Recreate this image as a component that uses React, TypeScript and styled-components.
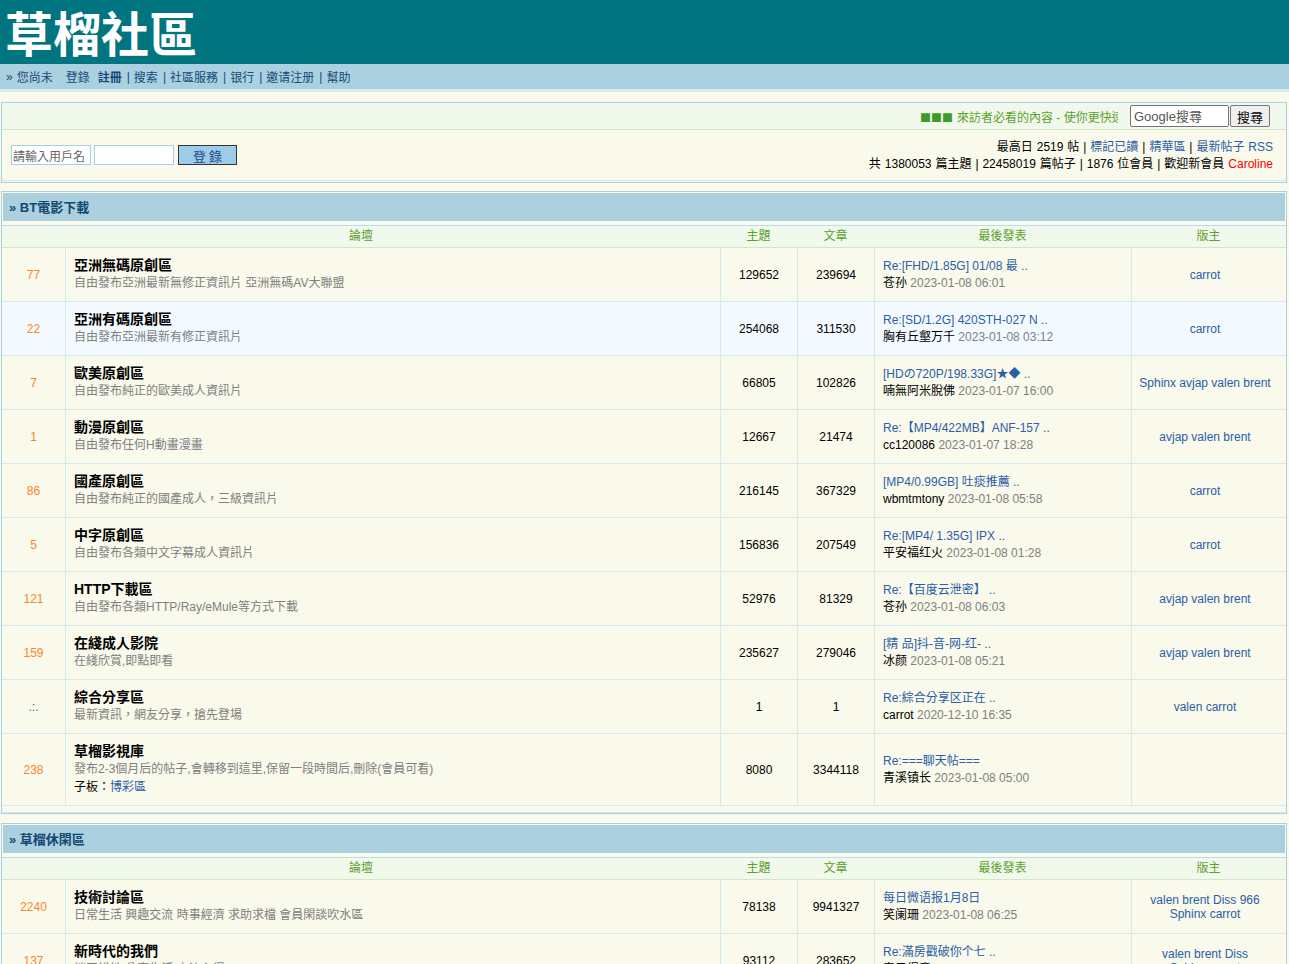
import React from "react";
import styled, { createGlobalStyle } from "styled-components";

const GlobalStyle = createGlobalStyle`
  html { scrollbar-width: none; }
  html::-webkit-scrollbar { display: none; }
  body {
    margin: 0;
    background: #f9f9ec;
    font-family: "Liberation Sans", Arial, "Noto Sans CJK TC", sans-serif;
    font-size: 12px;
    color: #000;
  }
  a { text-decoration: none; color: #2b5ea6; }
`;

interface Forum {
  today: string;
  title: string;
  desc: string;
  sub?: string;
  topics: string;
  posts: string;
  last: string;
  author: string;
  date: string;
  mods: string[];
  hover?: boolean;
}

const btForums: Forum[] = [
  { today: "77", title: "亞洲無碼原創區", desc: "自由發布亞洲最新無修正資訊片 亞洲無碼AV大聯盟", topics: "129652", posts: "239694", last: "Re:[FHD/1.85G] 01/08 最 ..", author: "苍孙", date: "2023-01-08 06:01", mods: ["carrot"] },
  { today: "22", title: "亞洲有碼原創區", desc: "自由發布亞洲最新有修正資訊片", topics: "254068", posts: "311530", last: "Re:[SD/1.2G] 420STH-027 N ..", author: "胸有丘壑万千", date: "2023-01-08 03:12", mods: ["carrot"], hover: true },
  { today: "7", title: "歐美原創區", desc: "自由發布純正的歐美成人資訊片", topics: "66805", posts: "102826", last: "[HDの720P/198.33G]★◆ ..", author: "喃無阿米脫佛", date: "2023-01-07 16:00", mods: ["Sphinx avjap valen brent"] },
  { today: "1", title: "動漫原創區", desc: "自由發布任何H動畫漫畫", topics: "12667", posts: "21474", last: "Re:【MP4/422MB】ANF-157 ..", author: "cc120086", date: "2023-01-07 18:28", mods: ["avjap valen brent"] },
  { today: "86", title: "國產原創區", desc: "自由發布純正的國產成人，三級資訊片", topics: "216145", posts: "367329", last: "[MP4/0.99GB] 吐痰推薦 ..", author: "wbmtmtony", date: "2023-01-08 05:58", mods: ["carrot"] },
  { today: "5", title: "中字原創區", desc: "自由發布各類中文字幕成人資訊片", topics: "156836", posts: "207549", last: "Re:[MP4/ 1.35G]  IPX ..", author: "平安福红火", date: "2023-01-08 01:28", mods: ["carrot"] },
  { today: "121", title: "HTTP下載區", desc: "自由發布各類HTTP/Ray/eMule等方式下載", topics: "52976", posts: "81329", last: "Re:【百度云泄密】 ..", author: "苍孙", date: "2023-01-08 06:03", mods: ["avjap valen brent"] },
  { today: "159", title: "在綫成人影院", desc: "在綫欣賞,即點即看", topics: "235627", posts: "279046", last: "[精 品]抖-音-网-红- ..", author: "冰颜", date: "2023-01-08 05:21", mods: ["avjap valen brent"] },
  { today: ".:.", title: "綜合分享區", desc: "最新資訊，網友分享，搶先登場", topics: "1", posts: "1", last: "Re:綜合分享区正在 ..", author: "carrot", date: "2020-12-10 16:35", mods: ["valen carrot"] },
  { today: "238", title: "草榴影視庫", desc: "發布2-3個月后的帖子,會轉移到這里,保留一段時間后,刪除(會員可看)", sub: "博彩區", topics: "8080", posts: "3344118", last: "Re:===聊天帖===", author: "青溪镇长", date: "2023-01-08 05:00", mods: [] },
];

const leisureForums: Forum[] = [
  { today: "2240", title: "技術討論區", desc: "日常生活 興趣交流 時事經濟 求助求檔 會員閑談吹水區", topics: "78138", posts: "9941327", last: "每日微语报1月8日", author: "笑阑珊", date: "2023-01-08 06:25", mods: ["valen brent Diss 966", "Sphinx carrot"] },
  { today: "137", title: "新時代的我們", desc: "談天說地 分享生活 交流心得", topics: "93112", posts: "283652", last: "Re:滿房戳破你个七 ..", author: "春风得意", date: "2023-01-08 06:20", mods: ["valen brent Diss", "Sphinx carrot"] },
];

const navLinks = ["搜索", "社區服務", "银行", "邀请注册", "幫助"];

const Banner = styled.div`
  height: 64px;
  background: #00747f;
  padding-left: 5px;
`;

const Logo = styled.div`
  font-family: "Noto Sans CJK TC", sans-serif;
  font-size: 48px;
  font-weight: 700;
  line-height: 62px;
  height: 64px;
  color: #fff;
`;

const NavBar = styled.div`
  height: 25px;
  display: flex;
  align-items: center;
  background: #abd0e0;
  padding-left: 6px;
  color: #134a7a;
  border-bottom: 3px solid #d6eaf2;
  a { color: #134a7a; }
`;

const NavLink = styled.a<{ $gap?: number; $bold?: boolean }>`
  margin-left: ${(p) => p.$gap ?? 0}px;
  font-weight: ${(p) => (p.$bold ? 700 : 400)};
`;

const Sep = styled.span`
  padding: 0 4px 0 5px;
`;

const Box = styled.div<{ $top: number }>`
  margin: ${(p) => p.$top}px 2px 0 1px;
  border: 1px solid #a9d0e0;
  background: #f9f9ec;
`;

const InfoTop = styled.div`
  height: 26px;
  background: #f1f8ec;
  border-bottom: 1px solid #cfe9c6;
  display: flex;
  align-items: center;
  justify-content: flex-end;
  padding-right: 16px;
`;

const Marquee = styled.div`
  width: 198px;
  overflow: hidden;
  white-space: nowrap;
  color: #5aa22c;
  margin-right: 12px;
`;

const Squares = styled.span`
  font-family: "Noto Sans CJK TC", sans-serif;
  font-size: 11px;
  color: #3f9a2a;
  margin-right: 4px;
`;

const SearchInput = styled.input`
  width: 99px;
  height: 22px;
  box-sizing: border-box;
  border: 1px solid #767676;
  border-radius: 2px;
  font-family: "Liberation Sans", Arial, "Noto Sans CJK TC", sans-serif;
  font-size: 13px;
  padding: 0 3px;
  &::placeholder { color: #555; }
`;

const SearchButton = styled.button`
  height: 22px;
  width: 40px;
  box-sizing: border-box;
  border: 1px solid #767676;
  border-radius: 2px;
  background: #efefef;
  font-family: "Noto Sans CJK TC", sans-serif;
  font-size: 13px;
  padding: 0;
  margin-left: 1px;
`;

const InfoBottom = styled.div`
  height: 50px;
  margin-bottom: 1px;
  border-bottom: 1px solid #cfe6ef;
  display: flex;
  align-items: center;
  justify-content: space-between;
  padding: 0 13px 0 9px;
`;

const LoginForm = styled.div`
  display: flex;
  align-items: center;
  gap: 3px;
`;

const LoginInput = styled.input`
  width: 80px;
  height: 20px;
  box-sizing: border-box;
  border: 1px solid #a9d0e0;
  background: #fff;
  font-family: "Noto Sans CJK TC", sans-serif;
  font-size: 12px;
  color: #666;
  padding: 0 1px;
`;

const LoginButton = styled.button`
  width: 59px;
  height: 20px;
  margin-left: 1px;
  border: 1px solid #333;
  background: #9ecbe8;
  color: #134a80;
  font-family: "Noto Sans CJK TC", sans-serif;
  font-size: 13px;
  padding: 0;
`;

const Stats = styled.div`
  text-align: right;
  line-height: 17px;
  padding-top: 1px;
  word-spacing: 0.6px;
`;

const NewMember = styled.a`
  color: #f00;
`;

const SectionBar = styled.div`
  height: 28px;
  margin: 1px 1px 0 1px;
  background: #abd0e0;
  line-height: 29px;
  padding-left: 6px;
  font-size: 13px;
  font-weight: 700;
  color: #12476f;
`;

const Grid = styled.div`
  display: grid;
  grid-template-columns: 63px 1fr 77px 77px 257px 155px;
`;

const ColumnHeader = styled(Grid)`
  margin-top: 4px;
  height: 21px;
  border-top: 1px solid #bcdcea;
  border-bottom: 1px solid #cfe9c6;
  background: #f1f8ec;
  color: #5aa22c;
  line-height: 21px;
  text-align: center;
`;

const ForumCol = styled.div`
  grid-column: span 2;
`;

const Row = styled(Grid)<{ $hover?: boolean }>`
  min-height: 53px;
  border-bottom: 1px solid #d3e9f1;
  background: ${(p) => (p.$hover ? "#f3faff" : "transparent")};
`;

const Cell = styled.div`
  border-left: 1px solid #d3e9f1;
  display: flex;
  align-items: center;
`;

const TodayCell = styled.div<{ $dots?: boolean }>`
  display: flex;
  align-items: center;
  justify-content: center;
  color: ${(p) => (p.$dots ? "#2b5ea6" : "#f8872b")};
`;

const NameCell = styled(Cell)`
  flex-direction: column;
  align-items: flex-start;
  justify-content: center;
  padding: 8px 8px 9px;
  line-height: 18px;
`;

const ForumTitle = styled.a`
  font-size: 14px;
  font-weight: 700;
  color: #000;
`;

const ForumDesc = styled.div`
  color: #808080;
`;

const CountCell = styled(Cell)`
  justify-content: center;
`;

const LastCell = styled(Cell)`
  flex-direction: column;
  align-items: flex-start;
  justify-content: center;
  padding-left: 8px;
  line-height: 17px;
`;

const PostDate = styled.span`
  color: #808080;
`;

const ModCell = styled(Cell)`
  flex-direction: column;
  justify-content: center;
  text-align: center;
  line-height: 14px;
  padding-right: 8px;
`;

const Filler = styled.div`
  height: 6px;
  border-bottom: 1px solid #d3e9f1;
`;

function ForumSection({ title, forums, top, filler }: { title: string; forums: Forum[]; top: number; filler?: boolean }) {
  return (
    <Box $top={top}>
      <SectionBar>» {title}</SectionBar>
      <ColumnHeader>
        <ForumCol>論壇</ForumCol>
        <div>主題</div>
        <div>文章</div>
        <div>最後發表</div>
        <div>版主</div>
      </ColumnHeader>
      {forums.map((f) => (
        <Row key={f.title} $hover={f.hover}>
          <TodayCell $dots={f.today === ".:."}>{f.today}</TodayCell>
          <NameCell>
            <ForumTitle href="#">{f.title}</ForumTitle>
            <ForumDesc>{f.desc}</ForumDesc>
            {f.sub && (
              <div>
                子板：<a href="#">{f.sub}</a>
              </div>
            )}
          </NameCell>
          <CountCell>{f.topics}</CountCell>
          <CountCell>{f.posts}</CountCell>
          <LastCell>
            <a href="#">{f.last}</a>
            <div>
              {f.author} <PostDate>{f.date}</PostDate>
            </div>
          </LastCell>
          <ModCell>
            {f.mods.map((m) => (
              <a href="#" key={m}>{m}</a>
            ))}
          </ModCell>
        </Row>
      ))}
      {filler && <Filler />}
    </Box>
  );
}

export default function App() {
  return (
    <>
      <GlobalStyle />
      <Banner>
        <Logo>草榴社區</Logo>
      </Banner>
      <NavBar>
        <span>»</span>
        <NavLink href="#" $gap={4}>您尚未</NavLink>
        <NavLink href="#" $gap={13}>登錄</NavLink>
        <NavLink href="#" $gap={8} $bold>註冊</NavLink>
        {navLinks.map((l) => (
          <React.Fragment key={l}>
            <Sep>|</Sep>
            <NavLink href="#">{l}</NavLink>
          </React.Fragment>
        ))}
      </NavBar>
      <Box $top={10}>
        <InfoTop>
          <Marquee>
            <Squares>■■■</Squares>來訪者必看的內容 - 使你更快速上手
          </Marquee>
          <SearchInput placeholder="Google搜尋" />
          <SearchButton>搜尋</SearchButton>
        </InfoTop>
        <InfoBottom>
          <LoginForm>
            <LoginInput defaultValue="請輸入用戶名" />
            <LoginInput type="password" />
            <LoginButton>登 錄</LoginButton>
          </LoginForm>
          <Stats>
            <div>
              最高日 2519 帖 | <a href="#">標記已讀</a> | <a href="#">精華區</a> | <a href="#">最新帖子 RSS</a>
            </div>
            <div>
              共 1380053 篇主題 | 22458019 篇帖子 | 1876 位會員 | 歡迎新會員 <NewMember href="#">Caroline</NewMember>
            </div>
          </Stats>
        </InfoBottom>
      </Box>
      <ForumSection title="BT電影下載" forums={btForums} top={8} filler />
      <ForumSection title="草榴休閑區" forums={leisureForums} top={9} />
    </>
  );
}
